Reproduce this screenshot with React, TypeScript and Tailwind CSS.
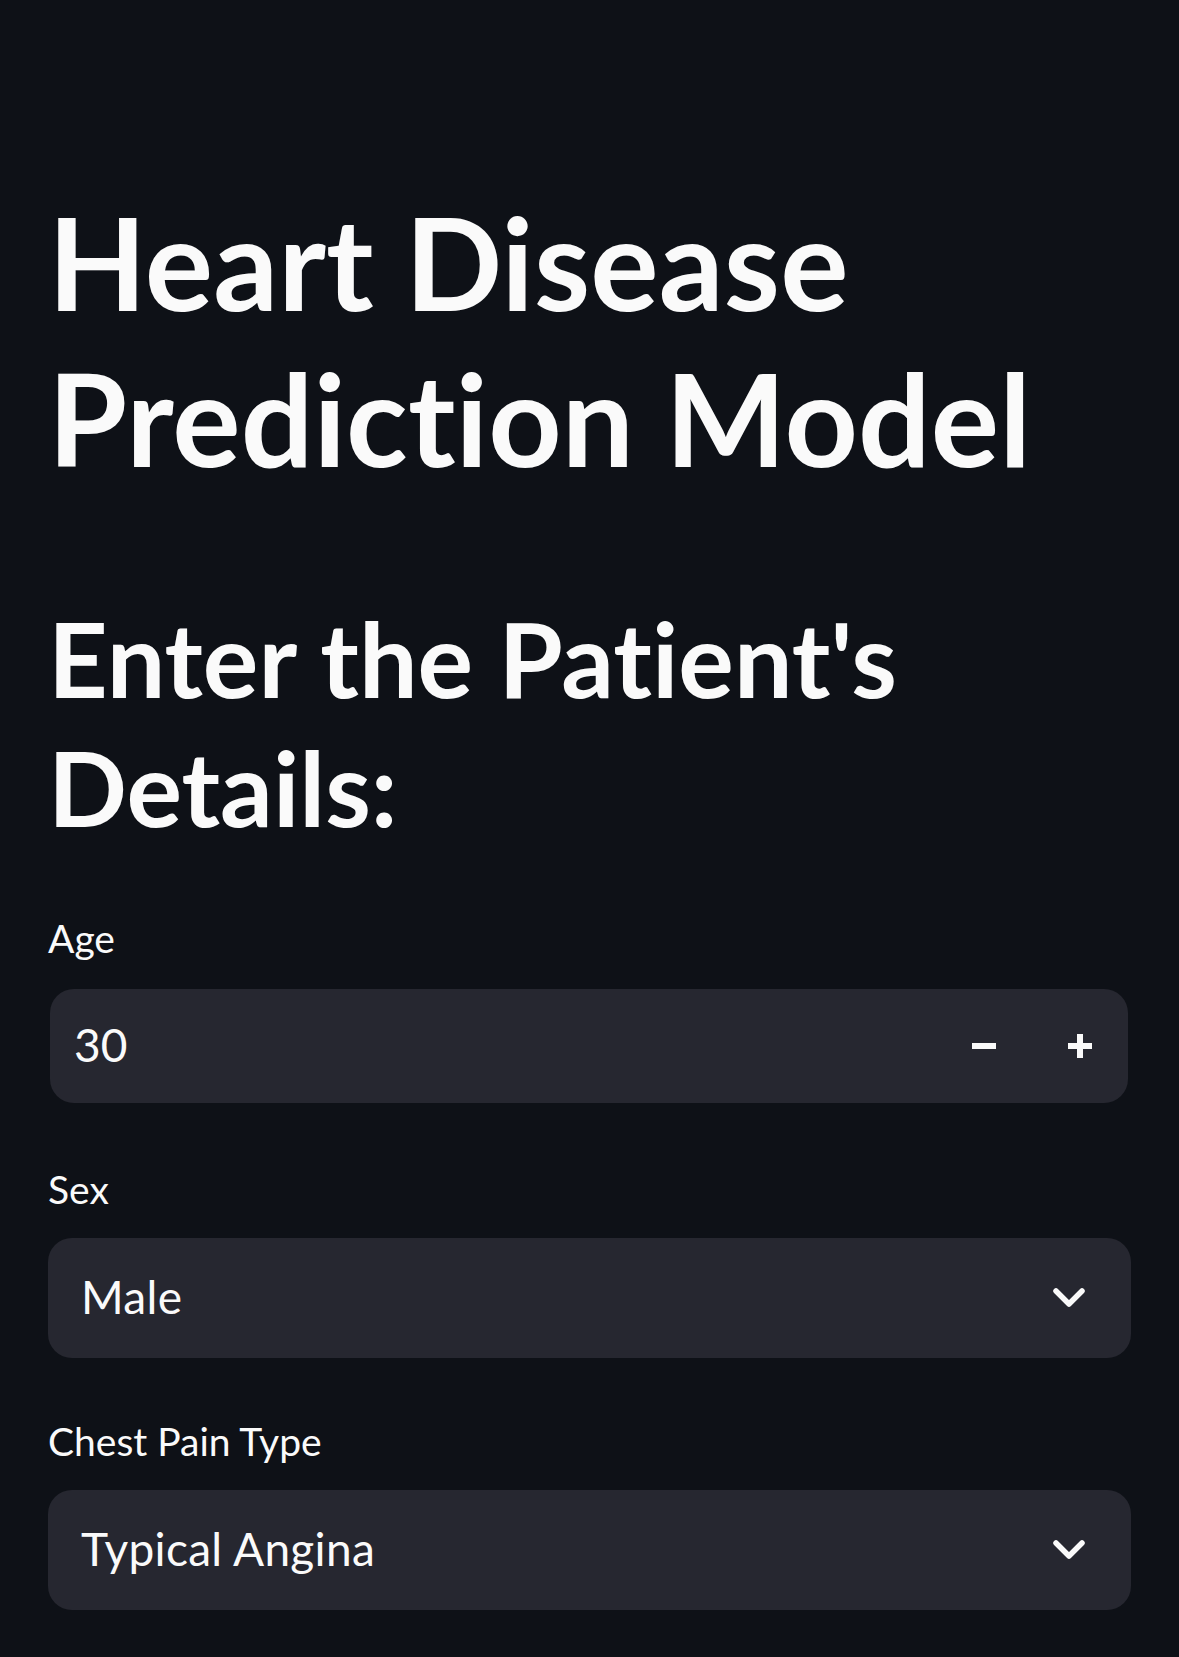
import React from 'react';

const font = { fontFamily: 'Lato, "Noto Sans", sans-serif' };

const Chevron = () => (
  <svg width="32" height="20" viewBox="0 0 32 20" fill="none">
    <path d="M3 3 L16 16 L29 3" stroke="#fafafa" strokeWidth="5.5" strokeLinecap="round" strokeLinejoin="round" />
  </svg>
);

const SelectBox: React.FC<{ label: string; value: string; gapTop: string }> = ({ label, value, gapTop }) => (
  <div className={gapTop}>
    <label className="block text-[39px] leading-[50px] text-[#fafafa]">{label}</label>
    <div className="mt-[24px] flex h-[120px] items-center justify-between rounded-[24px] bg-[#262730] pl-[33px] pr-[46px]">
      <span className="-mt-[4px] text-[46px] tracking-[0.3px] text-[#fafafa]">{value}</span>
      <Chevron />
    </div>
  </div>
);

export default function App() {
  return (
    <div className="min-h-screen bg-[#0e1117] text-[#fafafa] [font-variant-ligatures:none]" style={font}>
      <div className="px-[48px] pt-[184px] pb-[60px]">
        {/* Title */}
        <h1 className="text-[128px] leading-[156px] font-bold tracking-[0.1px]">
          Heart Disease
          <br />
          Prediction Model
        </h1>

        <h2 className="mt-[97px] text-[104px] leading-[129px] font-bold">
          Enter the Patient's
          <br />
          Details:
        </h2>

        {/* Age */}
        <div className="mt-[62px]">
          <label className="block text-[39px] leading-[50px]">Age</label>
          <div className="mt-[26px] ml-[2px] mr-[3px] flex h-[114px] items-center justify-between rounded-[24px] bg-[#262730] pl-[24px] pr-[36px]">
            <span className="-mt-[4px] text-[46px]">30</span>
            <div className="flex items-center gap-[72px]">
              <svg width="24" height="24" viewBox="0 0 24 24">
                <rect x="0" y="9" width="24" height="6" fill="#fafafa" />
              </svg>
              <svg width="24" height="24" viewBox="0 0 24 24">
                <rect x="0" y="9" width="24" height="6" fill="#fafafa" />
                <rect x="9" y="0" width="6" height="24" fill="#fafafa" />
              </svg>
            </div>
          </div>
        </div>

        <SelectBox label="Sex" value="Male" gapTop="mt-[61px]" />
        <SelectBox label="Chest Pain Type" value="Typical Angina" gapTop="mt-[58px]" />
      </div>
    </div>
  );
}
